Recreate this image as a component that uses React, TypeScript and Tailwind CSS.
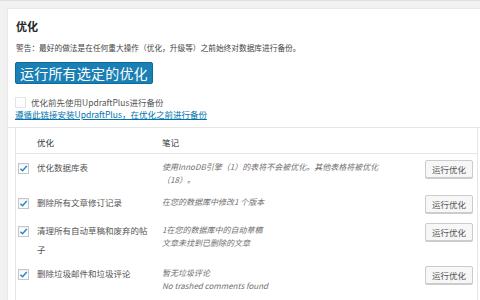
import React from 'react'

interface Row {
  name: string[];
  notes: string[];
  height: string;
}

const rows: Row[] = [
  {
    name: ['优化数据库表'],
    notes: ['使用InnoDB引擎（1）的表将不会被优化。其他表格将被优化', '（18）。'],
    height: 'h-[35px]',
  },
  {
    name: ['删除所有文章修订记录'],
    notes: ['在您的数据库中修改1 个版本'],
    height: 'h-[28px]',
  },
  {
    name: ['清理所有自动草稿和废弃的帖', '子'],
    notes: ['1在您的数据库中的自动草稿', '文章未找到已删除的文章'],
    height: 'h-[43px]',
  },
  {
    name: ['删除垃圾邮件和垃圾评论'],
    notes: ['暂无垃圾评论', 'No trashed comments found'],
    height: 'h-[40px]',
  },
]

const Checkbox = ({ checked }: { checked: boolean }) => (
  <div className="w-[11px] h-[11px] border border-[#c3c7cb] bg-white shadow-[inset_0_1px_2px_rgba(0,0,0,0.08)] flex items-center justify-center">
    {checked && (
      <svg width="9" height="9" viewBox="0 0 10 10">
        <path d="M1.6 5.2 L4 7.5 L8.6 2.2" fill="none" stroke="#1e8cbe" strokeWidth="1.7" />
      </svg>
    )}
  </div>
)

export default function App() {
  return (
    <div
      className="w-[480px] h-[300px] overflow-hidden bg-[#f1f1f1] border-t border-[#dedede] pt-[7px] pl-[7px]"
      style={{ fontFamily: '"Noto Sans CJK SC", "Open Sans", sans-serif' }}
    >
      <div className="bg-white h-full border-l border-t border-[#e8e8e8] pl-[7px] pt-[10px]">
        <h2 className="text-[11px] leading-[14px] font-bold text-[#23282d] pl-[1px]">优化</h2>
        <p className="mt-[9px] text-[7.7px] leading-[12px] text-[#444] pl-[1px]">
          警告：最好的做法是在任何重大操作（优化，升级等）之前始终对数据库进行备份。
        </p>
        <button className="block mt-[8px] h-[22px] px-[4px] bg-[#1a7fb5] border border-[#0f6a9c] rounded-[2px] text-white text-[14px] leading-[20px] tracking-[0.2px]">
          运行所有选定的优化
        </button>
        <div className="mt-[12px] flex items-center h-[12px]">
          <div className="w-[11px] h-[11px] border border-[#e2e4e6] bg-white" />
          <span className="ml-[5px] text-[8.5px] text-[#555]">优化前先使用UpdraftPlus进行备份</span>
        </div>
        <a className="block mt-0 text-[8.5px] leading-[12px] text-[#0073aa] underline">
          遵循此链接安装UpdraftPlus，在优化之前进行备份
        </a>
        <div className="mt-[7px] border-t border-[#e5e5e5] -ml-[7px] pl-[7px]">
          <div className="w-[463px] border-l border-r border-[#e5e5e5]">
            <div className="grid grid-cols-[21px_125px_263px_48px] h-[26px] border-b border-[#e5e5e5] text-[8.5px] text-[#32373c] pt-[8px]">
              <div />
              <div className="leading-[12px]">优化</div>
              <div className="leading-[12px]">笔记</div>
              <div />
            </div>
            {rows.map((r, i) => (
              <div key={i} className={`grid grid-cols-[21px_125px_263px_48px] ${r.height}`}>
                <div className="pt-[9px] pl-[2px]">
                  <Checkbox checked />
                </div>
                <div className="pt-[4px] text-[8.5px] leading-[19px] text-[#555] pr-[8px]">
                  {r.name.map((n, j) => (
                    <div key={j}>{n}</div>
                  ))}
                </div>
                <div className="pt-[6px] text-[8px] leading-[13px] text-[#6f6f6f] italic">
                  {r.notes.map((n, j) => (
                    <div key={j}>{n}</div>
                  ))}
                </div>
                <div className="pt-[6px]">
                  <button className="block w-[48px] h-[18px] bg-[#f7f7f7] border border-[#cccccc] rounded-[2px] shadow-[0_1px_0_#cccccc] text-[8.5px] leading-[16px] text-[#555]">
                    运行优化
                  </button>
                </div>
              </div>
            ))}
          </div>
        </div>
      </div>
    </div>
  )
}
